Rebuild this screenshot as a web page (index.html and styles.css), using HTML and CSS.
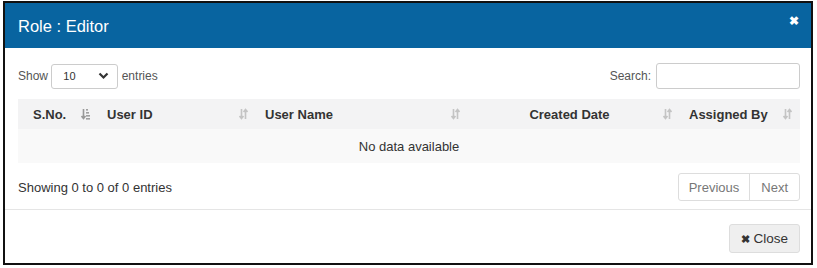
FILE: index.html
```html
<!DOCTYPE html>
<html lang="en">
<head>
<meta charset="UTF-8">
<meta name="viewport" content="width=device-width, initial-scale=1.0">
<title>Role : Editor</title>
<link rel="stylesheet" href="styles.css">
</head>
<body>
    <div class="modal">
        <div class="modal-header">
            <h4 class="modal-title">Role : Editor</h4>
            <span class="close">&#10006;</span>
        </div>
        <div class="modal-body">
            <div class="toolbar">
                <label class="length">Show <span class="select">10<svg width="11" height="8" viewBox="0 0 11 8"><path d="M1.5 1.5 L5.5 5.5 L9.5 1.5" fill="none" stroke="#333" stroke-width="2.2"/></svg></span> entries</label>
                <label class="search">Search: <span class="search-input"></span></label>
            </div>
            <table class="grid">
                <thead>
                    <tr>
                        <th class="c1 sorted">S.No.</th>
                        <th class="c2">User ID</th>
                        <th class="c3">User Name</th>
                        <th class="c4">Created Date</th>
                        <th class="c5">Assigned By</th>
                    </tr>
                </thead>
                <tbody>
                    <tr><td colspan="5" class="empty">No data available</td></tr>
                </tbody>
            </table>
            <div class="table-foot">
                <div class="info">Showing 0 to 0 of 0 entries</div>
                <div class="pager">
                    <span class="page">Previous</span>
                    <span class="page">Next</span>
                </div>
            </div>
        </div>
        <div class="modal-footer">
            <button class="btn"><span class="x">&#10006;</span> Close</button>
        </div>
    </div>
</body>
</html>
```

FILE: styles.css
```css
body {
    margin: 0;
    padding: 1px 0 0 3px;
    font-family: "Liberation Sans", Arial, sans-serif;
    font-size: 13px;
    color: #333;
    background: #fff;
}
.modal {
    width: 806px;
    height: 260px;
    border: 2px solid #111;
    display: flex;
    flex-direction: column;
}
.modal-header {
    height: 45px;
    background-color: #0864a0;
    color: #fff;
    display: flex;
    align-items: center;
    justify-content: space-between;
    padding: 0 12px 0 13px;
}
.modal-title {
    margin: 0;
    font-size: 16.5px;
    font-weight: normal;
    padding-top: 2px;
}
.close {
    font-size: 12px;
    font-weight: bold;
    margin-top: -10px;
}
.modal-body {
    padding: 15px 11px 8px 13px;
    border-bottom: 1px solid #e5e5e5;
}
.toolbar {
    display: flex;
    justify-content: space-between;
    align-items: center;
    height: 26px;
    color: #555;
    font-size: 12px;
}
.select {
    display: inline-flex;
    align-items: center;
    justify-content: space-between;
    box-sizing: border-box;
    width: 67px;
    height: 25px;
    border: 1px solid #ccc;
    border-radius: 3px;
    padding: 0 8px 0 11px;
    color: #333;
    font-size: 11px;
    vertical-align: middle;
}
.search {
    display: flex;
    align-items: center;
}
.search-input {
    display: inline-block;
    box-sizing: border-box;
    width: 144px;
    height: 26px;
    border: 1px solid #ccc;
    border-radius: 3px;
    margin-left: 5px;
}
.grid {
    width: 100%;
    border-collapse: collapse;
    margin-top: 10px;
}
.grid th {
    height: 30px;
    padding: 0 18px 0 9px;
    background-color: #f3f3f4;
    text-align: left;
    font-size: 13px;
    position: relative;
    box-sizing: border-box;
}
.grid th::after {
    content: "";
    position: absolute;
    right: 8px;
    top: 9px;
    width: 9px;
    height: 12px;
    background: url("data:image/svg+xml;utf8,<svg xmlns='http://www.w3.org/2000/svg' width='9' height='12' viewBox='0 0 9 12'><path d='M2.5 1 V10 M0.5 8 L2.5 10.5 L4.5 8 M6.5 11 V2 M4.5 4 L6.5 1.5 L8.5 4' fill='none' stroke='%23c4c4c4' stroke-width='1.6'/></svg>") no-repeat;
}
.grid th.sorted::after {
    background: url("data:image/svg+xml;utf8,<svg xmlns='http://www.w3.org/2000/svg' width='9' height='12' viewBox='0 0 9 12'><path d='M2.5 1 V10 M0.5 8 L2.5 10.5 L4.5 8' fill='none' stroke='%23999' stroke-width='1.6'/><rect x='5' y='1' width='2' height='1.6' fill='%23a0a0a0'/><rect x='5' y='4' width='3' height='1.6' fill='%23a0a0a0'/><rect x='5' y='7' width='4' height='1.6' fill='%23a0a0a0'/><rect x='5' y='10' width='4' height='1.6' fill='%23a0a0a0'/></svg>") no-repeat;
}
.grid th.c1 { width: 80px; padding-left: 15px; }
.grid th.c2 { width: 158px; }
.grid th.c3 { width: 212px; }
.grid th.c4 { width: 212px; text-align: center; }
.grid td.empty {
    height: 34px;
    background-color: #f9f9f9;
    text-align: center;
    padding: 0;
    box-sizing: border-box;
}
.table-foot {
    display: flex;
    justify-content: space-between;
    align-items: center;
    margin-top: 10px;
}
.pager {
    display: flex;
    border: 1px solid #ddd;
    border-radius: 3px;
    height: 26px;
}
.page {
    display: flex;
    align-items: center;
    padding: 0 10px;
    color: #777;
}
.page + .page {
    border-left: 1px solid #ddd;
    padding: 0 11px;
}
.modal-footer {
    display: flex;
    justify-content: flex-end;
    padding: 14px 11px 0 0;
}
.btn {
    height: 29px;
    padding: 0 11px;
    background-color: #efefef;
    border: 1px solid #ddd;
    border-radius: 3px;
    font-family: "Liberation Sans", Arial, sans-serif;
    font-size: 13.5px;
    color: #333;
}
.btn .x {
    font-size: 11px;
    font-weight: bold;
}
```
